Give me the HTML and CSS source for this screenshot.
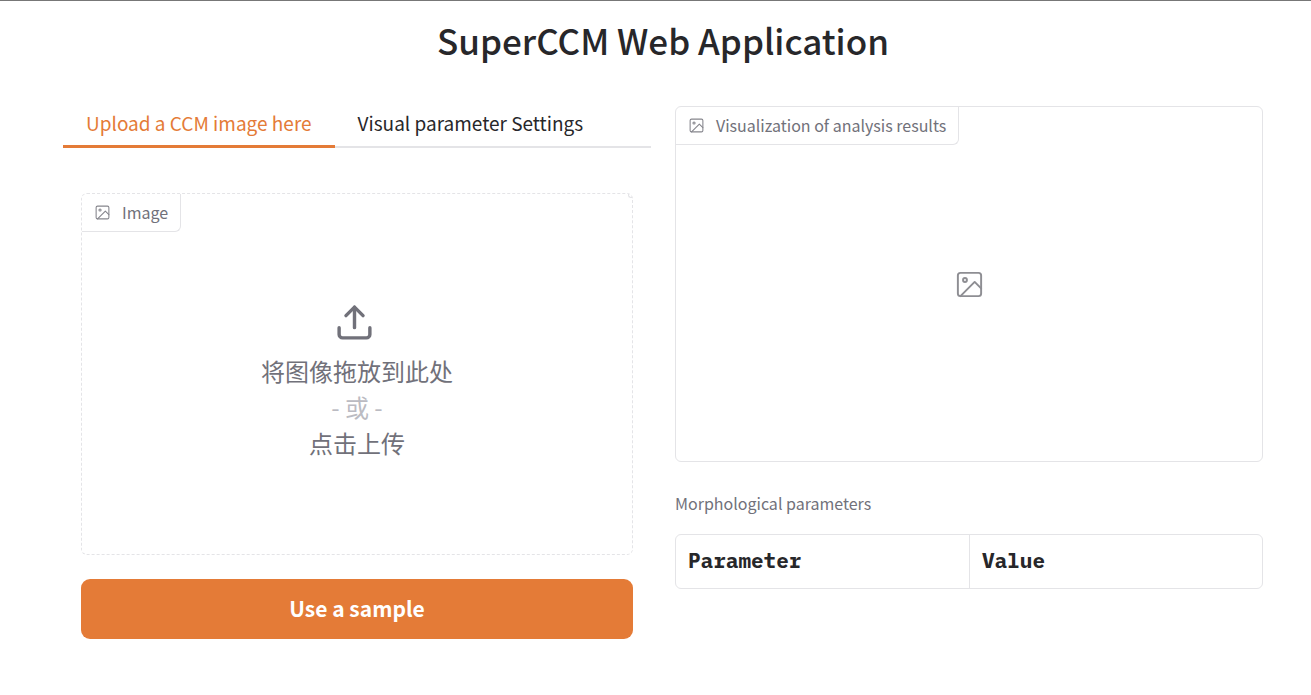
FILE: index.html
```html
<!DOCTYPE html>
<html lang="zh-CN">
<head>
<meta charset="utf-8">
<meta name="viewport" content="width=device-width, initial-scale=1">
<title>SuperCCM Web Application</title>
<link rel="stylesheet" href="styles.css">
</head>
<body>
<svg class="defs" aria-hidden="true">
  <symbol id="icon-image" viewBox="0 0 24 24" fill="none" stroke="currentColor" stroke-width="1.5" stroke-linecap="round" stroke-linejoin="round">
    <rect x="3" y="3" width="18" height="18" rx="2"/>
    <circle cx="8.5" cy="8.5" r="1.5"/>
    <path d="M21 15l-5-5L5 21"/>
  </symbol>
</svg>
<main class="app">
  <h1 class="title">SuperCCM Web Application</h1>
  <div class="columns">
    <section class="column">
      <div class="tabs" role="tablist">
        <button class="tab tab-selected" role="tab" aria-selected="true">Upload a CCM image here</button>
        <button class="tab" role="tab" aria-selected="false">Visual parameter Settings</button>
      </div>
      <div class="panel" role="tabpanel">
        <div class="block upload">
          <div class="block-label"><svg class="label-icon"><use href="#icon-image"/></svg>Image</div>
          <span class="toolbar-corner"></span>
          <button class="dropzone">
            <svg class="upload-icon" viewBox="0 0 24 24" fill="none" stroke="currentColor" stroke-width="2" stroke-linecap="round" stroke-linejoin="round">
              <path d="M21 15v4a2 2 0 0 1-2 2H5a2 2 0 0 1-2-2v-4"/>
              <path d="M17 8l-5-5-5 5"/>
              <path d="M12 3v12"/>
            </svg>
            <span>将图像拖放到此处</span>
            <span class="or">- 或 -</span>
            <span>点击上传</span>
          </button>
        </div>
        <button class="sample">Use a sample</button>
      </div>
    </section>
    <section class="column results">
      <div class="block output">
        <div class="block-label"><svg class="label-icon"><use href="#icon-image"/></svg>Visualization of analysis results</div>
        <svg class="empty-icon"><use href="#icon-image"/></svg>
      </div>
      <div class="table-wrap">
        <table class="params">
          <caption>Morphological parameters</caption>
          <thead><tr><th scope="col">Parameter</th><th scope="col">Value</th></tr></thead>
        </table>
      </div>
    </section>
  </div>
</main>
</body>
</html>
```
FILE: styles.css
```css
* { box-sizing: border-box; }

body {
  margin: 0;
  border-top: 1px solid #777;
  background: #fff;
  color: #27272a;
  font-family: "Noto Sans CJK SC", "Noto Sans", sans-serif;
  font-size: 18px;
  line-height: 24px;
}

button { font-family: inherit; cursor: pointer; }

.defs { position: absolute; width: 0; height: 0; }

.app { padding: 15px 48px 48px 63px; }

.title {
  margin: 0 0 37px;
  text-align: center;
  font-size: 35px;
  font-weight: 500;
  line-height: 48px;
}

.columns {
  display: grid;
  grid-template-columns: 1fr 1fr;
  align-items: start;
  gap: 24px;
}

.tabs {
  display: flex;
  height: 47px;
  box-shadow: inset 0 -2px #e4e4e7;
}

.tab {
  padding: 0 23px;
  border: 0;
  border-bottom: 3px solid transparent;
  background: none;
  color: #27272a;
  font-size: 19px;
  line-height: 24px;
}

.tab-selected {
  border-bottom-color: #e47b37;
  color: #e47b37;
}

.panel {
  display: flex;
  flex-direction: column;
  gap: 24px;
  padding: 45px 18px 0;
}

.block {
  position: relative;
  display: flex;
  flex-direction: column;
  border: 1px solid #e4e4e7;
  border-radius: 6px;
}

.upload { min-height: 362px; border-style: dashed; }

.block-label {
  position: absolute;
  top: 0;
  left: 0;
  display: flex;
  align-items: center;
  gap: 11px;
  padding: 7px 12px;
  border: solid #e4e4e7;
  border-width: 0 1px 1px 0;
  border-radius: 0 0 6px 0;
  color: #71717a;
  font-size: 16px;
  line-height: 23px;
}

.label-icon { width: 17px; height: 17px; color: #85858c; }

.toolbar-corner {
  position: absolute;
  top: 0;
  right: 0;
  width: 4px;
  height: 4px;
  border: solid #e4e4e7;
  border-width: 0 0 1px 1px;
  border-radius: 0 0 0 3px;
}

.dropzone {
  display: flex;
  flex: 1;
  flex-direction: column;
  align-items: center;
  justify-content: center;
  padding: 14px 0 0;
  border: 0;
  background: none;
  color: #71717a;
  font-size: 24px;
  line-height: 36px;
}

.upload-icon { width: 41px; height: 41px; margin: 0 6px 10px 0; }

.or { color: #bbbbc2; }

.sample {
  height: 60px;
  padding: 0 0 2px;
  border: 0;
  border-radius: 9px;
  background: #e47b37;
  color: #fff;
  font-size: 21px;
  font-weight: 600;
  line-height: 30px;
}

.results {
  display: flex;
  flex-direction: column;
  gap: 29px;
  padding-top: 5px;
}

.output {
  min-height: 356px;
  align-items: center;
  justify-content: center;
}

.empty-icon { width: 31px; height: 31px; color: #8e8e93; }

.params {
  width: 100%;
  table-layout: fixed;
  border: 1px solid #e4e4e7;
  border-spacing: 0;
  border-radius: 6px;
}

.params caption {
  padding-bottom: 19px;
  text-align: left;
  color: #71717a;
  font-size: 16px;
}

.params th {
  padding: 10px 12px 13px;
  text-align: left;
  font-family: "IBM Plex Mono", "Liberation Mono", monospace;
  font-size: 21px;
  font-weight: 700;
  line-height: 30px;
}

.params th + th { border-left: 1px solid #e4e4e7; }
```
